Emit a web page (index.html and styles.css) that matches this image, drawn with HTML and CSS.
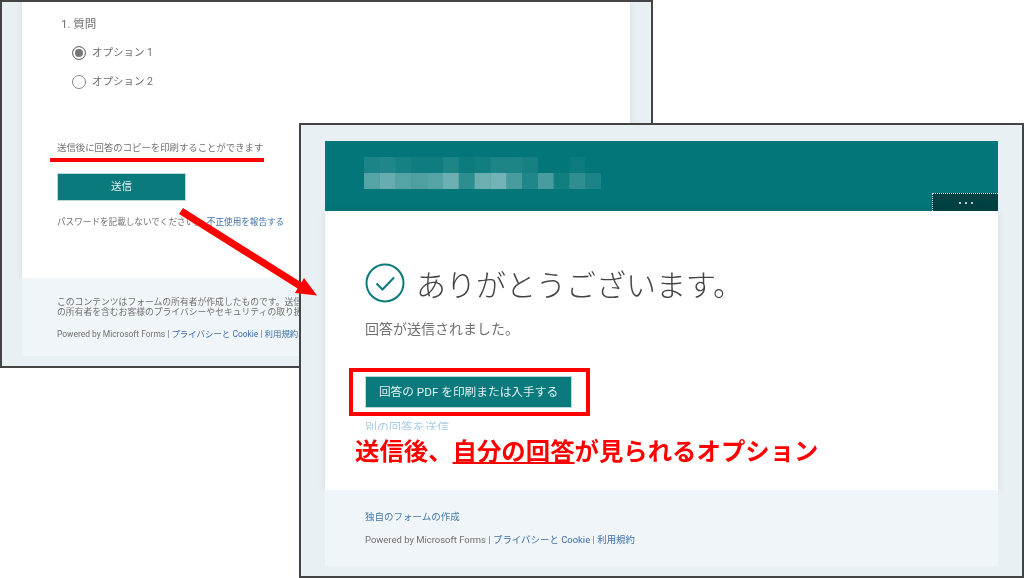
FILE: index.html
```html
<!DOCTYPE html>
<html lang="ja">
<head>
  <meta charset="UTF-8" />
  <title>送信後に回答のコピーを印刷</title>
  <link rel="stylesheet" href="styles.css">
</head>
<body>

  <!-- 送信前のフォーム -->
  <section class="window window-form">
    <div class="panel">
      <div class="card">
        <div class="question">1. 質問</div>
        <div class="option"><span class="radio radio-on"></span>オプション 1</div>
        <div class="option option-second"><span class="radio"></span>オプション 2</div>
        <p class="notice">送信後に回答のコピーを印刷することができます</p>
        <button class="btn btn-submit">送信</button>
        <p class="warning">パスワードを記載しないでください。<a class="link link-report">不正使用を報告する</a></p>
      </div>
      <div class="foot">
        <p class="foot-line">このコンテンツはフォームの所有者が作成したものです。送信</p>
        <p class="foot-line">の所有者を含むお客様のプライバシーやセキュリティの取り扱</p>
        <p class="powered">Powered by Microsoft Forms | <a class="link">プライバシーと Cookie</a> | <a class="link">利用規約</a></p>
      </div>
    </div>
  </section>

  <!-- 送信後の画面 -->
  <section class="window window-done">
    <div class="panel">
      <header class="banner">
        <svg class="mosaic" width="237" height="32" viewBox="0 0 240 32" preserveAspectRatio="none">
          <g fill="#fff">
            <rect x="0" y="0" width="16" height="16" opacity=".1"/>
            <rect x="16" y="0" width="16" height="16" opacity=".12"/>
            <rect x="32" y="0" width="16" height="16" opacity=".08"/>
            <rect x="48" y="0" width="16" height="16" opacity=".05"/>
            <rect x="64" y="0" width="16" height="16" opacity=".05"/>
            <rect x="80" y="0" width="16" height="16" opacity=".11"/>
            <rect x="96" y="0" width="16" height="16" opacity=".04"/>
            <rect x="112" y="0" width="16" height="16" opacity=".06"/>
            <rect x="128" y="0" width="16" height="16" opacity=".11"/>
            <rect x="144" y="0" width="16" height="16" opacity=".11"/>
            <rect x="160" y="0" width="16" height="16" opacity=".08"/>
            <rect x="208" y="0" width="16" height="16" opacity=".04"/>
            <rect x="0" y="16" width="16" height="16" opacity=".33"/>
            <rect x="16" y="16" width="16" height="16" opacity=".4"/>
            <rect x="32" y="16" width="16" height="16" opacity=".33"/>
            <rect x="48" y="16" width="16" height="16" opacity=".3"/>
            <rect x="64" y="16" width="16" height="16" opacity=".33"/>
            <rect x="80" y="16" width="16" height="16" opacity=".42"/>
            <rect x="96" y="16" width="16" height="16" opacity=".17"/>
            <rect x="112" y="16" width="16" height="16" opacity=".42"/>
            <rect x="128" y="16" width="16" height="16" opacity=".45"/>
            <rect x="144" y="16" width="16" height="16" opacity=".28"/>
            <rect x="160" y="16" width="16" height="16" opacity=".12"/>
            <rect x="176" y="16" width="16" height="16" opacity=".28"/>
            <rect x="192" y="16" width="16" height="16" opacity=".06"/>
            <rect x="208" y="16" width="16" height="16" opacity=".18"/>
            <rect x="224" y="16" width="16" height="16" opacity=".1"/>
          </g>
        </svg>
        <div class="more"><span></span><span></span><span></span></div>
      </header>
      <div class="card card-done">
        <div class="thanks">
          <svg class="check" width="40" height="40" viewBox="0 0 40 40">
            <circle cx="20" cy="20" r="18.5" fill="none" stroke="#0b7a7c" stroke-width="2"/>
            <path d="M11.5 20.5 L17.5 26.5 L29 14.5" fill="none" stroke="#0b7a7c" stroke-width="2"/>
          </svg>
          <h1>ありがとうございます。</h1>
        </div>
        <p class="sent">回答が送信されました。</p>
        <button class="btn btn-pdf">回答の PDF を印刷または入手する</button>
        <div class="again">別の回答を送信</div>

        <div class="red-box"></div>
        <div class="caption">送信後、<u>自分の回答</u>が見られるオプション</div>
      </div>
      <div class="foot foot-done">
        <a class="link create">独自のフォームの作成</a>
        <p class="powered">Powered by Microsoft Forms | <a class="link">プライバシーと Cookie</a> | <a class="link">利用規約</a></p>
      </div>
    </div>
  </section>

  <!-- 赤い注釈 -->
  <div class="red-line"></div>
  <svg class="arrow" width="1024" height="578" viewBox="0 0 1024 578">
    <path d="M179 214 L183 208 L301.4 282.5 L304 278 L317 295.5 L295 293 L297.6 288.5 Z" fill="#ff0000"/>
  </svg>

</body>
</html>
```

FILE: styles.css
```css
body {
  margin: 0;
  width: 1024px;
  height: 578px;
  position: relative;
  overflow: hidden;
  background: #ffffff;
  font-family: Roboto, 'Noto Sans CJK JP', sans-serif;
  color: #707070;
}

p {
  margin: 0;
}

/* ウィンドウ */
.window {
  position: absolute;
  box-sizing: border-box;
  border: 2px solid #444;
  background: #e8f0f3;
  overflow: hidden;
  filter: blur(0.45px);
}

.window-form {
  left: 0;
  top: 0;
  width: 653px;
  height: 368px;
  padding-left: 20px;
}

.window-done {
  left: 299px;
  top: 123px;
  width: 725px;
  height: 455px;
  padding: 16px 0 0 24px;
}

.window-form .panel {
  width: 608px;
}

.window-done .panel {
  width: 673px;
}

.card {
  background: #fff;
  box-shadow: 0 0 8px rgba(0, 0, 0, 0.08);
  position: relative;
}

.foot {
  background: #eff5f8;
  box-sizing: border-box;
  position: relative;
}

.link {
  color: #3b6ea8;
}

.btn {
  display: block;
  border: 1px solid #bcd9da;
  background: #0b7a7c;
  color: #e2f0f0;
  font-family: inherit;
  padding: 0 0 3px;
}

/* 左のフォーム */
.window-form .card {
  height: 276px;
  padding: 14px 0 0 35px;
  box-sizing: border-box;
}

.question {
  margin-left: 4px;
  font-size: 11.5px;
  line-height: 16px;
}

.option {
  display: flex;
  align-items: center;
  margin: 11px 0 0 15px;
  font-size: 10.5px;
  line-height: 20px;
}

.option-second {
  margin-top: 9px;
}

.radio {
  box-sizing: border-box;
  width: 14px;
  height: 14px;
  margin-right: 6px;
  border: 1px solid #8a8a8a;
  border-radius: 50%;
  background: #fff;
}

.radio-on {
  border-color: #777;
  background: #777;
  box-shadow: inset 0 0 0 2px #fff;
}

.notice {
  margin-top: 49px;
  font-size: 9.4px;
  line-height: 14px;
  white-space: nowrap;
}

.btn-submit {
  width: 129px;
  height: 28px;
  margin-top: 18px;
  font-size: 10.5px;
}

.warning {
  margin-top: 14px;
  font-size: 8.6px;
  line-height: 14px;
  white-space: nowrap;
}

.link-report {
  margin-left: 4px;
}

.window-form .foot {
  height: 78px;
  padding: 19px 0 0 35px;
  overflow: hidden;
}

.foot-line {
  font-size: 8.8px;
  line-height: 10px;
  white-space: nowrap;
}

.powered {
  font-size: 8.45px;
  line-height: 14px;
  white-space: nowrap;
}

.window-form .powered {
  margin-top: 10px;
}

/* 右の完了画面 */
.banner {
  height: 70px;
  background: #037679;
  position: relative;
  padding: 16px 0 0 39px;
  box-sizing: border-box;
}

.mosaic {
  display: block;
}

.more {
  position: absolute;
  right: 0;
  bottom: 0;
  width: 66px;
  height: 18px;
  box-sizing: border-box;
  background: #004144;
  border-top: 1px dotted #cfe3e3;
  border-left: 1px dotted #cfe3e3;
  display: flex;
  justify-content: center;
  align-items: center;
  gap: 4px;
}

.more span {
  width: 2px;
  height: 2px;
  border-radius: 50%;
  background: #fff;
}

.card-done {
  height: 279px;
  padding: 52px 0 0 40px;
  box-sizing: border-box;
  overflow: hidden;
}

.thanks {
  display: flex;
  align-items: center;
  height: 40px;
  margin-bottom: 16px;
}

.check {
  margin-right: 11px;
}

h1 {
  margin: 0;
  font-family: 'Noto Sans CJK JP', sans-serif;
  font-size: 30px;
  font-weight: 300;
  line-height: 40px;
  color: #444;
  white-space: nowrap;
}

.sent {
  font-size: 14px;
  line-height: 20px;
}

.btn-pdf {
  width: 207px;
  height: 32px;
  margin-top: 37px;
  font-size: 11.7px;
}

/* キャプションの上で切れている */
.again {
  height: 10px;
  overflow: hidden;
  margin-top: 12px;
  font-size: 12px;
  line-height: 16px;
  color: #a8cfe8;
}

.red-box {
  position: absolute;
  left: 24px;
  top: 157px;
  width: 241px;
  height: 48px;
  box-sizing: border-box;
  border: 4px solid #ff0000;
}

.caption {
  position: absolute;
  left: 30px;
  top: 219px;
  font-family: 'Noto Sans CJK JP', sans-serif;
  font-size: 24.4px;
  font-weight: 700;
  line-height: 40px;
  color: #ff0000;
  white-space: nowrap;
}

.foot-done {
  height: 76px;
  padding: 21px 0 0 40px;
}

.create {
  display: block;
  font-size: 9.5px;
  line-height: 12px;
  color: #4a7aa8;
}

.foot-done .powered {
  margin-top: 10px;
  font-size: 9.45px;
}

/* 赤い注釈 */
.red-line {
  position: absolute;
  left: 50px;
  top: 158px;
  width: 214px;
  height: 4px;
  background: #ff0000;
}

.arrow {
  position: absolute;
  left: 0;
  top: 0;
}
```
